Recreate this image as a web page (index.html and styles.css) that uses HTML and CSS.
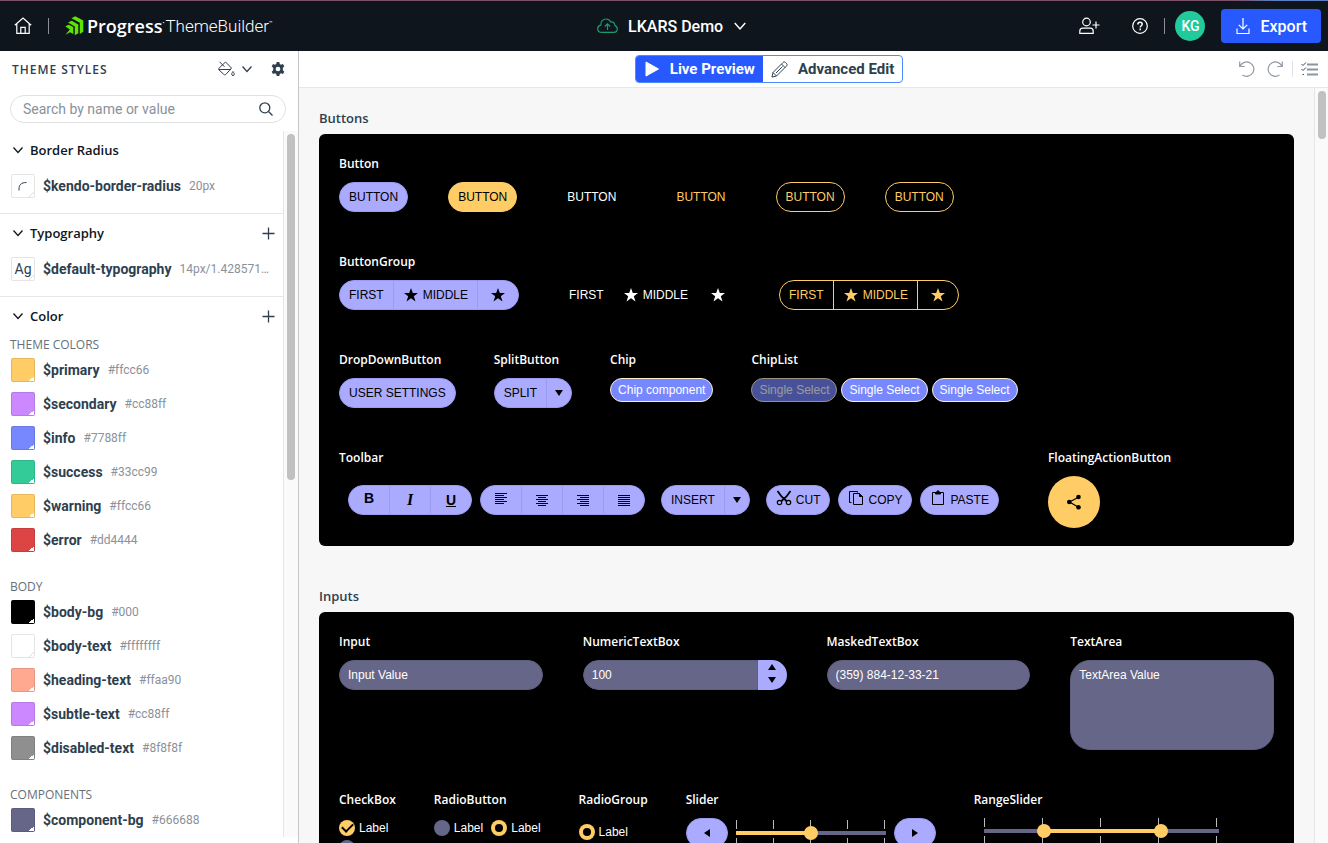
FILE: index.html
```html
<!DOCTYPE html>
<html lang="en">
<head>
    <meta charset="UTF-8">
    <meta name="viewport" content="width=device-width, initial-scale=1.0">
    <title>LKARS Demo - ThemeBuilder</title>
    <link rel="stylesheet" href="styles.css">
</head>
<body>

    <!-- Shared icons -->
    <svg class="sprite" aria-hidden="true">
        <symbol id="star" viewBox="0 0 16 16"><path d="M8 1l1.800 5H15l-4.200 3.200L12.500 14.500 8 11.300 3.500 14.500l1.700-5.300L1 6h5.200z"/></symbol>
        <symbol id="down" viewBox="0 0 16 16"><path d="M4 5h8l-4 6z"/></symbol>
        <symbol id="chevron" viewBox="0 0 12 12"><path d="M1.500 3.500L6 8.500l4.500-5" fill="none" stroke="currentColor" stroke-width="1.300"/></symbol>
        <symbol id="plus" viewBox="0 0 15 15"><path d="M7.500 1.500v12M1.500 7.500h12" fill="none" stroke="currentColor" stroke-width="1.300"/></symbol>
    </svg>

    <header class="header">
        <div class="header-left">
            <a href="#" class="home" aria-label="Home">
                <svg width="18" height="18" viewBox="0 0 18 18" fill="none" stroke="currentColor" stroke-width="1.200"><path d="M.8 8.300L9 1l8.200 7.300M2.800 6.800v9.600h12.400V6.800M6.800 16.400v-6h4.400v6"/></svg>
            </a>
            <span class="divider"></span>
            <a href="#" class="logo">
                <svg width="19" height="20" viewBox="0 0 19 20" fill="#5ce500"><path d="M6.500 2.200L10.200.200 18.300 4.600v11.200L14.800 18V6.800z"/><path d="M3 6.600l3.700-1.800 6.600 3.600v8.800l-3.500 2v-8.700z"/><path d="M.300 10.200l3.500-1.500 4.500 2.400v7L5 16.200l-4.500 2.500 4.300-5.200z"/></svg>
                <strong>Progress</strong><span class="dot">&bull;</span><span class="product">ThemeBuilder</span><span class="tm">&trade;</span>
            </a>
        </div>

        <button class="project">
            <svg width="21" height="16" viewBox="0 0 21 16" fill="none" stroke="#1c9a6b" stroke-width="1.200"><path d="M5 14.400C2.500 14.400.700 13 .700 10.700c0-2 1.300-3.200 3-3.500C3.700 3.500 6 1 9 1c2.300 0 4 1.200 4.800 3 2.400-.400 4.200 1.200 4.100 3.600 1.500.500 2.400 1.600 2.400 3.200 0 2.100-1.500 3.600-3.700 3.600z"/><path d="M10.500 12V6M7.800 8.500l2.700-2.700 2.700 2.700"/></svg>
            <span>LKARS Demo</span>
            <svg width="14" height="14"><use href="#chevron"/></svg>
        </button>

        <div class="header-right">
            <button class="icon-btn invite" aria-label="Invite user">
                <svg width="21" height="18" viewBox="0 0 21 18" fill="none" stroke="currentColor" stroke-width="1.200"><circle cx="7.500" cy="5" r="3.800"/><path d="M.800 16.400v-2.200c0-2 1.200-3 3-3h7.400c1.800 0 3 1 3 3v2.200zM17 4.500v7M13.500 8H20.500"/></svg>
            </button>
            <button class="icon-btn" aria-label="Help">
                <svg width="16" height="16" viewBox="0 0 16 16" fill="none" stroke="currentColor"><circle cx="8" cy="8" r="7.300" stroke-width="1.200"/><path d="M5.900 6.400c0-1.300.900-2.100 2.200-2.100 1.200 0 2.100.800 2.100 1.900 0 1.500-2 1.700-2 3.400M8.200 10.600v1.600" stroke-width="1.500"/></svg>
            </button>
            <span class="divider"></span>
            <span class="avatar">KG</span>
            <button class="export">
                <svg width="14" height="18" viewBox="0 0 14 18" fill="none" stroke="currentColor" stroke-width="1.200"><path d="M7 1v11M2.800 7.800L7 12l4.200-4.200M1 11.500v5h12v-5"/></svg>
                Export
            </button>
        </div>
    </header>

    <div class="workspace">
        <aside class="sidebar">
            <div class="sidebar-head">
                <h1>THEME STYLES</h1>
                <button class="icon-btn" aria-label="Swatches">
                    <svg width="17" height="16" viewBox="0 0 17 16" fill="none" stroke="currentColor"><path d="M1.500.800l5 5M7.500 1L13.500 7 8 13.300c-.700.700-1.500.700-2.200 0L1 9c-.600-.600-.600-1.200 0-1.800L7.500 1M1 8.500h12"/><path d="M15 10.500c-1 1.500-1.300 2-1.300 2.700a1.300 1.300 0 0 0 2.600 0c0-.700-.300-1.200-1.300-2.700z"/></svg>
                    <svg width="12" height="12"><use href="#chevron"/></svg>
                </button>
                <button class="icon-btn" aria-label="Settings">
                    <svg width="14" height="14" viewBox="0 0 16 16"><path fill="currentColor" fill-rule="evenodd" d="M6.500 0h3l.500 2.300 1.500.800 2.200-.700 1.500 2.600-1.700 1.600v2.800l1.700 1.600-1.500 2.600-2.200-.700-1.500.800-.500 2.300h-3L6 13.700l-1.500-.800-2.200.700L.800 11l1.700-1.600V6.600L.800 5l1.500-2.600 2.200.700L6 2.300zM8 5.300a2.700 2.700 0 1 0 0 5.400 2.700 2.700 0 0 0 0-5.400z"/></svg>
                </button>
            </div>

            <div class="search">
                <input type="text" placeholder="Search by name or value" aria-label="Search by name or value">
                <svg width="14" height="14" viewBox="0 0 14 14" fill="none" stroke="currentColor" stroke-width="1.300"><circle cx="5.800" cy="5.800" r="5"/><path d="M9.500 9.500l4 4"/></svg>
            </div>

            <div class="sidebar-body">
                <div class="variables">
                    <section class="group">
                        <h2><svg width="12" height="12"><use href="#chevron"/></svg>Border Radius</h2>
                        <div class="variable">
                            <span class="swatch swatch-empty"><svg width="10" height="10" viewBox="0 0 10 10" fill="none" stroke="#2e3f4f"><path d="M1 9.500V8c0-4 2-6.500 7.500-6.500"/></svg></span>
                            <b>$kendo-border-radius</b><small>20px</small>
                        </div>
                    </section>

                    <section class="group">
                        <h2><svg width="12" height="12"><use href="#chevron"/></svg>Typography
                            <button class="icon-btn add" aria-label="Add typography"><svg width="15" height="15"><use href="#plus"/></svg></button></h2>
                        <div class="variable">
                            <span class="swatch swatch-empty">Ag</span>
                            <b>$default-typography</b><small>14px/1.428571&hellip;</small>
                        </div>
                    </section>

                    <section class="group">
                        <h2><svg width="12" height="12"><use href="#chevron"/></svg>Color
                            <button class="icon-btn add" aria-label="Add color"><svg width="15" height="15"><use href="#plus"/></svg></button></h2>
                        <h3>THEME COLORS</h3>
                        <div class="variable"><span class="swatch" style="background-color: #ffcc66"></span><b>$primary</b><small>#ffcc66</small></div>
                        <div class="variable"><span class="swatch" style="background-color: #cc88ff"></span><b>$secondary</b><small>#cc88ff</small></div>
                        <div class="variable"><span class="swatch" style="background-color: #7788ff"></span><b>$info</b><small>#7788ff</small></div>
                        <div class="variable"><span class="swatch" style="background-color: #33cc99"></span><b>$success</b><small>#33cc99</small></div>
                        <div class="variable"><span class="swatch" style="background-color: #ffcc66"></span><b>$warning</b><small>#ffcc66</small></div>
                        <div class="variable"><span class="swatch" style="background-color: #dd4444"></span><b>$error</b><small>#dd4444</small></div>
                        <h3>BODY</h3>
                        <div class="variable"><span class="swatch" style="background-color: #000"></span><b>$body-bg</b><small>#000</small></div>
                        <div class="variable"><span class="swatch swatch-empty"></span><b>$body-text</b><small>#ffffffff</small></div>
                        <div class="variable"><span class="swatch" style="background-color: #ffaa90"></span><b>$heading-text</b><small>#ffaa90</small></div>
                        <div class="variable"><span class="swatch" style="background-color: #cc88ff"></span><b>$subtle-text</b><small>#cc88ff</small></div>
                        <div class="variable"><span class="swatch" style="background-color: #8f8f8f"></span><b>$disabled-text</b><small>#8f8f8f</small></div>
                        <h3>COMPONENTS</h3>
                        <div class="variable"><span class="swatch" style="background-color: #666688"></span><b>$component-bg</b><small>#666688</small></div>
                    </section>
                </div>
                <div class="scrollbar"><div class="thumb"></div></div>
            </div>
        </aside>

        <main class="main">
            <div class="mode-bar">
                <div class="modes">
                    <button class="mode active"><svg width="16" height="16" viewBox="0 0 16 16"><path fill="currentColor" stroke="currentColor" stroke-linejoin="round" d="M2 1l12.500 7L2 15z"/></svg>Live Preview</button>
                    <button class="mode"><svg width="17" height="17" viewBox="0 0 17 17" fill="none" stroke="currentColor"><path d="M1 16l1-4.500L12 1.500c.800-.800 1.700-.800 2.500 0l1 1c.800.800.800 1.700 0 2.500L5.500 15zM10.500 3L14 6.500M2 11.500L5.500 15M11.500 5.500L5 12"/></svg>Advanced Edit</button>
                </div>
                <div class="history">
                    <button class="icon-btn" aria-label="Undo"><svg width="16" height="16" viewBox="0 0 16 16" fill="none" stroke="currentColor" stroke-width="1.200"><path d="M.700.500v5h5M1 5.300A7.200 7.200 0 1 1 3.500 14"/></svg></button>
                    <button class="icon-btn" aria-label="Redo"><svg width="16" height="16" viewBox="0 0 16 16" fill="none" stroke="currentColor" stroke-width="1.200"><path d="M15.300.500v5h-5M15 5.300A7.200 7.200 0 1 0 12.500 14"/></svg></button>
                    <span class="divider"></span>
                    <button class="icon-btn" aria-label="Change log"><svg width="17" height="14" viewBox="0 0 17 14" fill="none" stroke="#8c94a1"><path stroke-width="1.800" d="M6 2.500h11M6 7.500h11M6 12.500h11"/><path stroke="#3f4d5e" d="M.500 2l1.500 1.500L5 .500M.500 7L2 8.500l3-3M1.500 12.500h1.500"/></svg></button>
                </div>
            </div>

            <div class="preview">
                <div class="canvas">
                    <h2 class="panel-title">Buttons</h2>
                    <section class="panel">
                        <div class="row">
                            <div class="demo">
                                <h3>Button</h3>
                                <div class="samples">
                                    <button class="btn">BUTTON</button>
                                    <button class="btn btn-primary">BUTTON</button>
                                    <button class="btn btn-flat">BUTTON</button>
                                    <button class="btn btn-flat btn-gold">BUTTON</button>
                                    <button class="btn btn-outline">BUTTON</button>
                                    <button class="btn btn-outline">BUTTON</button>
                                </div>
                            </div>
                        </div>

                        <div class="row">
                            <div class="demo">
                                <h3>ButtonGroup</h3>
                                <div class="samples">
                                    <div class="btn-group">
                                        <button class="btn">FIRST</button>
                                        <button class="btn"><svg class="icon"><use href="#star"/></svg>MIDDLE</button>
                                        <button class="btn btn-icon" aria-label="Star"><svg class="icon"><use href="#star"/></svg></button>
                                    </div>
                                    <div class="btn-group">
                                        <button class="btn btn-flat">FIRST</button>
                                        <button class="btn btn-flat"><svg class="icon"><use href="#star"/></svg>MIDDLE</button>
                                        <button class="btn btn-flat btn-icon" aria-label="Star"><svg class="icon"><use href="#star"/></svg></button>
                                    </div>
                                    <div class="btn-group">
                                        <button class="btn btn-outline">FIRST</button>
                                        <button class="btn btn-outline"><svg class="icon"><use href="#star"/></svg>MIDDLE</button>
                                        <button class="btn btn-outline btn-icon" aria-label="Star"><svg class="icon"><use href="#star"/></svg></button>
                                    </div>
                                </div>
                            </div>
                        </div>

                        <div class="row row-tight">
                            <div class="demo">
                                <h3>DropDownButton</h3>
                                <button class="btn">USER SETTINGS</button>
                            </div>
                            <div class="demo">
                                <h3>SplitButton</h3>
                                <div class="btn-group">
                                    <button class="btn">SPLIT</button>
                                    <button class="btn btn-arrow" aria-label="More"><svg class="icon"><use href="#down"/></svg></button>
                                </div>
                            </div>
                            <div class="demo">
                                <h3>Chip</h3>
                                <button class="chip">Chip component</button>
                            </div>
                            <div class="demo">
                                <h3>ChipList</h3>
                                <div class="chip-list">
                                    <button class="chip" disabled>Single Select</button>
                                    <button class="chip">Single Select</button>
                                    <button class="chip">Single Select</button>
                                </div>
                            </div>
                        </div>

                        <div class="row">
                            <div class="demo">
                                <h3>Toolbar</h3>
                                <div class="toolbar">
                                    <div class="btn-group">
                                        <button class="btn btn-icon btn-top" aria-label="Bold"><span class="format bold">B</span></button>
                                        <button class="btn btn-icon" aria-label="Italic"><span class="format italic">I</span></button>
                                        <button class="btn btn-icon" aria-label="Underline"><span class="format underline">U</span></button>
                                    </div>
                                    <div class="btn-group">
                                        <button class="btn btn-icon btn-top" aria-label="Align left"><svg class="icon" viewBox="0 0 16 16"><path d="M2 3h12v1H2zM2 5h9v1H2zM2 7h12v1H2zM2 9h9v1H2zM2 11h12v1H2zM2 13h9v1H2z"/></svg></button>
                                        <button class="btn btn-icon" aria-label="Align center"><svg class="icon" viewBox="0 0 16 16"><path d="M2 3h12v1H2zM4 5h8v1H4zM2 7h12v1H2zM4 9h8v1H4zM2 11h12v1H2zM4 13h8v1H4z"/></svg></button>
                                        <button class="btn btn-icon" aria-label="Align right"><svg class="icon" viewBox="0 0 16 16"><path d="M2 3h12v1H2zM5 5h9v1H5zM2 7h12v1H2zM5 9h9v1H5zM2 11h12v1H2zM5 13h9v1H5z"/></svg></button>
                                        <button class="btn btn-icon" aria-label="Justify"><svg class="icon" viewBox="0 0 16 16"><path d="M2 3h12v1H2zM2 5h12v1H2zM2 7h12v1H2zM2 9h12v1H2zM2 11h12v1H2zM2 13h12v1H2z"/></svg></button>
                                    </div>
                                    <div class="btn-group insert">
                                        <button class="btn">INSERT</button>
                                        <button class="btn btn-arrow" aria-label="More"><svg class="icon"><use href="#down"/></svg></button>
                                    </div>
                                    <button class="btn btn-tool"><svg class="icon icon-line" viewBox="0 0 16 16"><path stroke-width="1.800" d="M1.500 1l4 5.500 5 4.500M14.500 1l-4 5.500-5 4.500"/><circle cx="3.500" cy="12.500" r="2.200" stroke-width="1.200"/><circle cx="12.500" cy="12.500" r="2.200" stroke-width="1.200"/></svg>CUT</button>
                                    <button class="btn btn-tool"><svg class="icon icon-line" viewBox="0 0 16 16"><path d="M3.500 12.500h-2v-11h8v1M5.500 3.500h6l3 3v8h-9z"/><path fill="#000" d="M11.500 3.500v3h3z"/></svg>COPY</button>
                                    <button class="btn btn-tool"><svg class="icon icon-line" viewBox="0 0 16 16"><path d="M2.500 2.500h11v12h-11z"/><path fill="#000" d="M5.500 2.500h1.500V1h2v1.500h1.500V4h-5z"/></svg>PASTE</button>
                                </div>
                            </div>
                            <div class="demo">
                                <h3>FloatingActionButton</h3>
                                <button class="fab" aria-label="Share"><svg class="icon" viewBox="0 0 16 16"><path d="M13 3L3.500 8l9.500 5.500" fill="none" stroke="#000" stroke-width="1.200"/><circle cx="12.500" cy="3" r="2.300"/><circle cx="3.300" cy="8" r="2.300"/><circle cx="12.500" cy="13.300" r="2.300"/></svg></button>
                            </div>
                        </div>
                    </section>

                    <h2 class="panel-title">Inputs</h2>
                    <section class="panel">
                        <div class="row row-inputs">
                            <div class="demo">
                                <label class="caption" for="input">Input</label>
                                <input class="field" type="text" id="input" value="Input Value">
                            </div>
                            <div class="demo">
                                <label class="caption" for="numeric">NumericTextBox</label>
                                <div class="numeric">
                                    <input class="field" type="number" id="numeric" value="100">
                                    <div class="spinner">
                                        <button aria-label="Increase"><svg width="8" height="6"><path d="M0 6h8L4 0z"/></svg></button>
                                        <button aria-label="Decrease"><svg width="8" height="6"><path d="M0 0h8L4 6z"/></svg></button>
                                    </div>
                                </div>
                            </div>
                            <div class="demo">
                                <label class="caption" for="masked">MaskedTextBox</label>
                                <input class="field" type="text" id="masked" value="(359) 884-12-33-21">
                            </div>
                            <div class="demo">
                                <label class="caption" for="area">TextArea</label>
                                <textarea class="field area" id="area">TextArea Value</textarea>
                            </div>
                        </div>

                        <div class="row row-tight">
                            <div class="demo">
                                <h3>CheckBox</h3>
                                <label class="option"><input type="checkbox" checked>Label</label>
                                <div class="option"><input type="checkbox" aria-label="Unchecked"></div>
                            </div>
                            <div class="demo">
                                <h3>RadioButton</h3>
                                <div class="options">
                                    <label class="option"><input type="radio" name="single">Label</label>
                                    <label class="option"><input type="radio" name="single" checked>Label</label>
                                </div>
                            </div>
                            <div class="demo">
                                <h3>RadioGroup</h3>
                                <label class="option option-tall"><input type="radio" name="group" checked>Label</label>
                            </div>
                            <div class="demo">
                                <h3>Slider</h3>
                                <div class="slider">
                                    <button class="btn btn-icon" aria-label="Decrease"><svg width="8" height="8"><path d="M7 0v8L1 4z"/></svg></button>
                                    <div class="track track-single"><input type="range" min="0" max="10" value="5" aria-label="Slider"></div>
                                    <button class="btn btn-icon" aria-label="Increase"><svg width="8" height="8"><path d="M1 0v8l6-4z"/></svg></button>
                                </div>
                            </div>
                            <div class="demo">
                                <h3>RangeSlider</h3>
                                <div class="track track-range">
                                    <input type="range" min="0" max="100" value="24" aria-label="Range start">
                                    <input type="range" min="0" max="100" value="77" aria-label="Range end">
                                </div>
                            </div>
                        </div>
                    </section>
                </div>
                <div class="scrollbar"><div class="thumb"></div></div>
            </div>
        </main>
    </div>

</body>
</html>
```
FILE: styles.css
```css
/* General Styles */
* {
    box-sizing: border-box;
}

body {
    font-family: Roboto, sans-serif;
    font-size: 14px;
    margin: 0;
    height: 100vh;
    display: flex;
    flex-direction: column;
    color: #2e3f4f;
    background-color: #fff;
    overflow: hidden;
}

h1, h2, h3 {
    margin: 0;
    font-family: "Open Sans", sans-serif;
    white-space: nowrap;
}

button, input, textarea {
    font: inherit;
    color: inherit;
}

button {
    padding: 0;
    border: none;
    background: none;
    cursor: pointer;
    white-space: nowrap;
}

svg {
    display: block;
    flex: none;
}

.sprite {
    display: none;
}

.icon-btn {
    display: flex;
    align-items: center;
    gap: 6px;
}

/* Header */
.header {
    display: flex;
    align-items: center;
    justify-content: space-between;
    height: 51px;
    flex: none;
    padding: 0 7px 0 14px;
    border-top: 1px solid;
    border-image: linear-gradient(90deg, #7c5068 93%, #5d7fc2 96%) 1;
    background-color: #0f151c;
    color: #fff;
}

.header-left, .header-right, .logo, .project {
    display: flex;
    align-items: center;
}

.home {
    color: #fff;
}

.divider {
    width: 1px;
    height: 16px;
    background-color: #8b9097;
}

.header-left .divider {
    margin: 0 16px;
}

.logo {
    color: #fff;
    text-decoration: none;
    font-size: 17px;
}

.logo svg {
    margin-right: 3px;
}

.logo strong {
    font-family: "Open Sans", sans-serif;
    font-size: 18px;
    font-weight: 600;
}

.logo .dot {
    font-size: 6px;
    margin-bottom: 8px;
    width: 3px;
}

.product {
    font-weight: 300;
}

.tm {
    font-size: 6px;
    margin-bottom: 8px;
}

.project {
    gap: 10px;
    font-size: 16px;
    font-weight: 500;
}

.header-right .icon-btn {
    padding: 0 8px;
    margin-right: 8px;
}

.header-right .invite {
    margin-right: 16px;
}

.header-right .divider {
    margin-right: 10px;
}

.avatar {
    width: 30px;
    height: 30px;
    line-height: 30px;
    margin-right: 16px;
    border-radius: 50%;
    background-color: #22c99b;
    text-align: center;
    font-weight: 500;
}

.export {
    display: flex;
    align-items: center;
    gap: 10px;
    height: 34px;
    padding: 0 14px 0 15px;
    border-radius: 4px;
    background-color: #2759ff;
    color: #fff;
    font-size: 16px;
    font-weight: 500;
}

/* Layout */
.workspace {
    display: flex;
    flex: 1;
    min-height: 0;
}

.sidebar {
    display: flex;
    flex-direction: column;
    width: 299px;
    flex: none;
    padding-bottom: 6px;
    border-right: 1px solid #c4c6c8;
}

.main {
    display: flex;
    flex-direction: column;
    flex: 1;
    min-width: 0;
}

/* Sidebar */
.sidebar-head {
    display: flex;
    align-items: center;
    height: 36px;
    padding: 0 13px 0 12px;
    gap: 18px;
}

.sidebar-head h1 {
    flex: 1;
    font-size: 12px;
    font-weight: 600;
    letter-spacing: 1px;
}

.search {
    display: flex;
    align-items: center;
    height: 28px;
    flex: none;
    margin: 8px 12px 8px 10px;
    padding: 0 12px;
    border: 1px solid #dfe1e3;
    border-radius: 14px;
}

.search input {
    flex: 1;
    padding: 0;
    border: none;
    outline: none;
}

.search input::placeholder {
    color: #8a919a;
}

.sidebar-body {
    display: flex;
    flex: 1;
    min-height: 0;
}

.variables {
    flex: 1;
    min-width: 0;
    overflow: hidden;
}

.group {
    padding-bottom: 10px;
    border-bottom: 1px solid #e4e6e8;
}

.group h2 {
    display: flex;
    align-items: center;
    gap: 6px;
    height: 38px;
    padding: 0 7px 0 12px;
    font-size: 13px;
    font-weight: 600;
    color: #0f151c;
}

.group h3 {
    padding: 2px 0 0 10px;
    font-size: 12px;
    font-weight: 400;
    line-height: 16px;
    color: #66707c;
}

.variable + h3 {
    margin-top: 20px;
}

.add {
    margin-left: auto;
    color: #2e3f4f;
}

.variable {
    display: flex;
    align-items: center;
    height: 34px;
    padding-left: 11px;
    white-space: nowrap;
}

.variable small {
    font-size: 12px;
    color: #8a919a;
}

.variable b {
    margin-right: 8px;
}

.swatch {
    display: flex;
    align-items: center;
    justify-content: center;
    width: 24px;
    height: 24px;
    flex: none;
    margin-right: 8px;
    border: 1px solid rgba(0, 0, 0, 0.1);
    border-radius: 2px;
    background: linear-gradient(135deg, transparent 50%, #fff 50%) right bottom / 5px 5px no-repeat;
}

.swatch-empty {
    background-image: linear-gradient(135deg, transparent 45%, #ddd 50%, #fff 60%);
}

/* Scrollbars */
.scrollbar {
    width: 14px;
    flex: none;
    padding: 3px;
    border-left: 1px solid #e6e6e6;
    background-color: #fafafa;
}

.sidebar .scrollbar {
    width: 15px;
}

.thumb {
    width: 8px;
    height: 346px;
    border-radius: 4px;
    background-color: #c1c1c1;
}

.preview .thumb {
    height: 48px;
}

/* Mode bar */
.mode-bar {
    display: flex;
    align-items: center;
    height: 37px;
    flex: none;
    padding-right: 10px;
    border-bottom: 1px solid #e6e7e8;
}

.modes {
    display: flex;
    height: 28px;
    margin: 0 auto;
    border: 1px solid #4b8bff;
    border-radius: 4px;
    overflow: hidden;
}

.mode {
    display: flex;
    align-items: center;
    gap: 10px;
    padding: 0 8px;
    font-size: 15px;
    font-weight: 700;
}

.mode.active {
    background-color: #2759ff;
    color: #fff;
}

.history {
    display: flex;
    align-items: center;
    gap: 12px;
    color: #9199a3;
}

.history .divider {
    margin: 0 -4px 0 -3px;
    background-color: #e0e2e4;
}

/* Preview */
.preview {
    display: flex;
    flex: 1;
    min-height: 0;
    background-color: #f7f7f7;
}

.canvas {
    flex: 1;
    min-width: 0;
    padding: 18px 20px;
    overflow: hidden;
}

.panel-title {
    margin-bottom: 4px;
    font-size: 13px;
    font-weight: 600;
    line-height: 24px;
}

.panel {
    margin-bottom: 38px;
    padding: 18px 20px;
    border-radius: 6px;
    background-color: #000;
    color: #fff;
    font-family: "Arial Narrow", "Liberation Sans", sans-serif;
    font-size: 12px;
}

.row {
    display: flex;
    gap: 40px;
}

.row-tight {
    gap: 38px;
}

.row + .row {
    margin-top: 38px;
}

.row-inputs {
    display: grid;
    grid-template-columns: repeat(4, 1fr);
}

.panel h3, .caption {
    display: block;
    margin-bottom: 6px;
    font-family: "Open Sans", sans-serif;
    font-size: 12px;
    font-weight: 600;
    line-height: 24px;
}

.samples {
    display: flex;
    gap: 40px;
}

/* Buttons */
.btn {
    display: inline-flex;
    align-items: center;
    justify-content: center;
    gap: 4px;
    height: 30px;
    padding: 0 9px;
    border: 1px solid #9b9bf0;
    border-radius: 15px;
    background-color: #aaaaff;
    color: #000;
}

.btn-primary {
    border-color: #ffcc66;
    background-color: #ffcc66;
}

.btn-flat {
    border-color: transparent;
    background-color: transparent;
    color: #fff;
}

.btn-gold {
    color: #ffcc66;
}

.btn-outline {
    border-color: #ffcc66;
    background-color: transparent;
    color: #ffcc66;
}

.btn-icon {
    width: 42px;
}

.btn-arrow {
    width: 26px;
    padding: 0;
}

.btn-top {
    padding-bottom: 4px;
}

.icon {
    width: 16px;
    height: 16px;
    fill: currentColor;
}

.icon-line {
    fill: none;
    stroke: currentColor;
}

.btn-group {
    display: flex;
}

.btn-group .btn {
    border-radius: 0;
}

.btn-group .btn + .btn {
    margin-left: -1px;
}

.btn-group .btn:first-child {
    border-radius: 15px 0 0 15px;
}

.btn-group .btn:last-child {
    border-radius: 0 15px 15px 0;
}

.chip {
    height: 24px;
    padding: 0 7px;
    border: 1px solid #fff0d0;
    border-radius: 12px;
    background-color: #7788ff;
    color: #fff;
}

.chip:disabled {
    opacity: 0.6;
}

.chip-list {
    display: flex;
    gap: 4px;
}

.toolbar {
    display: flex;
    gap: 8px;
    padding: 9px;
}

.insert {
    margin: 0 8px;
}

.btn-tool .icon {
    margin-bottom: 5px;
}

.format {
    font-family: "Liberation Sans", sans-serif;
    font-size: 14px;
    font-weight: 700;
    line-height: 16px;
}

.italic {
    font-family: "Liberation Serif", serif;
    font-size: 16px;
    font-style: italic;
}

.underline {
    text-decoration: underline;
}

.fab {
    display: flex;
    align-items: center;
    justify-content: center;
    width: 52px;
    height: 52px;
    border-radius: 50%;
    background-color: #ffcc66;
    color: #000;
}

/* Inputs */
.field {
    display: block;
    width: 100%;
    height: 30px;
    padding: 0 8px;
    border: 1px solid #5f5f80;
    border-radius: 15px;
    outline: none;
    background-color: #666688;
}

.area {
    height: 90px;
    padding: 7px 8px;
    border-radius: 20px;
    resize: none;
}

.numeric {
    display: flex;
    border-radius: 15px;
    overflow: hidden;
}

.numeric .field {
    flex: 1;
    min-width: 0;
    border-radius: 15px 0 0 15px;
    appearance: textfield;
}

.spinner {
    display: flex;
    flex-direction: column;
    justify-content: space-around;
    align-items: center;
    width: 29px;
    padding-bottom: 4px;
    background-color: #aaaaff;
}

.options {
    display: flex;
    gap: 8px;
}

.option {
    display: flex;
    align-items: center;
    gap: 4px;
    height: 20px;
}

.option-tall {
    height: 28px;
}

.option input {
    display: flex;
    align-items: center;
    justify-content: center;
    width: 16px;
    height: 16px;
    margin: 0;
    border-radius: 50%;
    background-color: #666688;
    appearance: none;
}

.option input:checked {
    background-color: #ffcc66;
}

.option input[type="radio"]:checked::after {
    content: "";
    width: 8px;
    height: 8px;
    border-radius: 50%;
    background-color: #000;
}

.option input[type="checkbox"]:checked::after {
    content: "";
    width: 9px;
    height: 5px;
    margin-bottom: 3px;
    border: solid #000;
    border-width: 0 0 2px 2px;
    transform: rotate(-45deg);
}

.slider {
    display: flex;
    align-items: center;
    gap: 8px;
}

/* The ticks sit above and below the line, every quarter */
.track {
    display: grid;
    align-items: center;
    height: 26px;
    background-image: linear-gradient(#000, #000), repeating-linear-gradient(90deg, #bbb 0 1px, transparent 1px 37px);
    background-size: 100% 9px, 100% 100%;
    background-repeat: no-repeat;
    background-position: center;
}

.track input {
    grid-area: 1 / 1;
    width: 100%;
    height: 14px;
    margin: 0;
    background: linear-gradient(#ffcc66, #ffcc66) left / 50% 4px no-repeat, linear-gradient(#666688, #666688) center / 100% 4px no-repeat;
    appearance: none;
}

.track input::-webkit-slider-thumb {
    width: 14px;
    height: 14px;
    border-radius: 50%;
    background-color: #ffcc66;
    appearance: none;
}

.track-single {
    width: 150px;
}

.track-range {
    width: 235px;
    margin-left: 10px;
    background-image: linear-gradient(#000, #000), repeating-linear-gradient(90deg, #bbb 0 1px, transparent 1px 58px);
}

.track-range input {
    background: linear-gradient(#ffcc66, #ffcc66) center / 50% 4px no-repeat, linear-gradient(#666688, #666688) center / 100% 4px no-repeat;
}

.track-range input + input {
    background: none;
    pointer-events: none;
}

.track-range input + input::-webkit-slider-thumb {
    pointer-events: auto;
}
```
